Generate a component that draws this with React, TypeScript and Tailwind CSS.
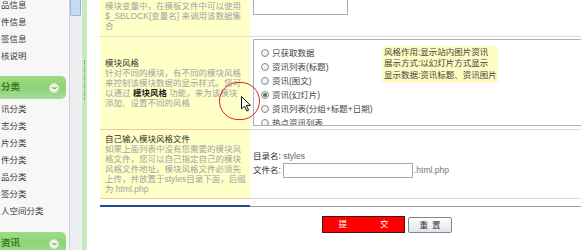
const topItems = ['品信息', '件信息', '签信息', '核说明'];
const midItems = ['讯分类', '志分类', '片分类', '件分类', '品分类', '签分类', '人空间分类'];

const radios = [
  '只获取数据',
  '资讯列表(标题)',
  '资讯(图文)',
  '资讯(幻灯片)',
  '资讯列表(分组+标题+日期)',
  '热点资讯列表',
];

const GroupHeader = ({ label }: { label: string }) => (
  <div className="w-[66px] h-[23px] rounded-r-[5px] bg-gradient-to-b from-[#9edb84] via-[#8fd476] to-[#a4dc9a] flex items-center justify-between">
    <span className="pl-[1px] text-[9.5px] font-bold text-[#3b7a1d]">{label}</span>
    <span className="mr-[7px] w-[10px] h-[10px] rounded-full bg-[#eef6e8] border border-[#cfe4c4] flex items-center justify-center">
      <svg width="5" height="4" viewBox="0 0 5 4">
        <path d="M0.5 1 L2.5 3 L4.5 1" fill="none" stroke="#5a6a50" strokeWidth="1" />
      </svg>
    </span>
  </div>
);

const Sidebar = () => (
  <div className="w-[69px] shrink-0 bg-[#f7f7f7] text-[#3a3a3a] text-[8.5px] overflow-hidden">
    <div className="-mt-[3.5px]">
      {topItems.map((t) => (
        <div key={t} className="h-[17px] leading-[17px] pl-[1px] whitespace-nowrap">
          {t}
        </div>
      ))}
    </div>
    <div className="mt-[11.5px]">
      <GroupHeader label="分类" />
    </div>
    <div className="mt-[2px]">
      {midItems.map((t) => (
        <div key={t} className="h-[17px] leading-[17px] pl-[1px] whitespace-nowrap">
          {t}
        </div>
      ))}
    </div>
    <div className="mt-[12px]">
      <GroupHeader label="资讯" />
    </div>
  </div>
);

const Radio = ({ label, checked }: { label: string; checked?: boolean }) => (
  <div className="h-[14px] flex items-center gap-[3px] whitespace-nowrap">
    <span className="w-[8px] h-[8px] rounded-full border border-[#7f8a96] bg-gradient-to-br from-white to-[#e4e4e4] flex items-center justify-center shrink-0">
      {checked && <span className="w-[4px] h-[4px] rounded-full bg-[#5d7a30]" />}
    </span>
    <span className="text-[#444]">{label}</span>
  </div>
);

const Line = ({ children }: { children: React.ReactNode }) => (
  <div className="h-[10px] leading-[10px] whitespace-nowrap">{children}</div>
);

export default function App() {
  return (
    <div className="relative flex w-[581px] h-[250px] overflow-hidden bg-white font-['Liberation_Sans','Noto_Sans_CJK_SC',sans-serif] text-[8.5px]">
      <Sidebar />

      {/* scrollbar */}
      <div className="w-[13px] shrink-0 bg-[#eceef1] border-l border-[#cfd3d8] border-r border-r-[#f4f4f4]">
        <div className="h-[16px] bg-[#c7d9f3] border border-[#9db4d8] border-t-0 rounded-b-[2px]" />
      </div>

      {/* splitter */}
      <div className="w-[5px] shrink-0 bg-[#c6eac2] flex justify-center">
        <div className="mt-[60px] w-0 h-[40px] border-l border-dotted border-[#6f9a6c]" />
      </div>

      {/* main */}
      <div className="flex-1 pl-[13px] bg-white">
        <div className="w-[490px]">
          {/* row 1 */}
          <div className="flex h-[37px]">
            <div className="w-[150px] shrink-0 bg-[#ffffc8] border-b border-[#e6e2bc] pl-[5px] pt-[1px] text-[#a3a3a3]">
              <Line>模块变量中，在模板文件中可以使用</Line>
              <Line>$_SBLOCK[变量名] 来调用该数据集</Line>
              <Line>合</Line>
            </div>
            <div className="flex-1 border-b border-[#dcdcdc] pl-[3px]">
              <div className="w-[95px] h-[15px] border border-t-0 border-[#a6adb6] bg-white" />
            </div>
          </div>

          {/* row 2 */}
          <div className="flex h-[93px]">
            <div className="w-[150px] shrink-0 bg-[#ffffc8] border-b border-[#efc99a] pl-[5px] flex flex-col justify-center text-[#a3a3a3]">
              <Line>
                <span className="text-[#333]">模块风格</span>
              </Line>
              <Line>针对不同的模块，有不同的模块风格</Line>
              <Line>来控制该模块数据的显示样式。您可</Line>
              <Line>
                以通过 <span className="text-[#222] font-bold">模块风格</span> 功能，来为该模块
              </Line>
              <Line>添加、设置不同的风格</Line>
            </div>
            <div className="flex-1 border-b border-[#dcdcdc] pl-[3px] pt-[2px]">
              <div className="relative h-[87px] border border-[#a9b4c2] bg-white overflow-hidden pl-[7px] pt-[6px]">
                {radios.map((r, i) => (
                  <Radio key={r} label={r} checked={i === 3} />
                ))}
                <div className="absolute left-[128px] top-[6px] w-[116px] h-[37px] bg-[#fffbc2] px-[2px] pt-[0.5px] text-[#444]">
                  <div className="h-[11.5px] leading-[11.5px] whitespace-nowrap">风格作用:显示站内图片资讯</div>
                  <div className="h-[11.5px] leading-[11.5px] whitespace-nowrap">展示方式:以幻灯片方式显示</div>
                  <div className="h-[11.5px] leading-[11.5px] whitespace-nowrap">显示数据:资讯标题、资讯图片</div>
                </div>
              </div>
            </div>
          </div>

          {/* row 3 */}
          <div className="flex h-[69px]">
            <div className="w-[150px] shrink-0 bg-[#ffffc8] border-b border-[#efc99a] pl-[5px] pb-[1px] flex flex-col justify-center text-[#a3a3a3]">
              <Line>
                <span className="text-[#333]">自己输入模块风格文件</span>
              </Line>
              <Line>如果上面列表中没有您需要的模块风</Line>
              <Line>格文件，您可以自己指定自己的模块</Line>
              <Line>风格文件地址。模块风格文件必须先</Line>
              <Line>上传，并放置于styles目录下面，后缀</Line>
              <Line>为 html.php</Line>
            </div>
            <div className="flex-1 border-b border-[#dcdcdc] pl-[3px] flex flex-col justify-center">
              <div className="h-[12px] leading-[12px] whitespace-nowrap">
                <span className="text-[#333]">目录名:</span> <span className="text-[#666]">styles</span>
              </div>
              <div className="h-[16px] flex items-center whitespace-nowrap">
                <span className="text-[#333] w-[30px]">文件名:</span>
                <div className="w-[130px] h-[15px] border border-[#9fa9b6] bg-white" />
                <span className="text-[#777] ml-[1px]">.html.php</span>
              </div>
            </div>
          </div>

          {/* table foot */}
          <div className="flex h-[8px]">
            <div className="w-[150px] shrink-0 border-b-2 border-[#1e4b8a]" />
            <div className="flex-1 border-b border-[#9c9c9c]" />
          </div>
        </div>

        {/* buttons */}
        <div className="mt-[9px] ml-[222px] flex items-start">
          <button className="w-[83px] h-[17px] bg-[#ff0000] border border-[#4a1414] text-white flex items-center justify-center gap-[33px] text-[8.5px]">
            <span>提</span>
            <span>交</span>
          </button>
          <button className="ml-[3px] mt-[1px] w-[44px] h-[16px] rounded-[2px] border border-[#7b8898] bg-gradient-to-b from-white to-[#dfe3e9] text-[#333] text-[8.5px] flex items-center justify-center gap-[4px]">
            <span>重</span>
            <span>置</span>
          </button>
        </div>
      </div>

      {/* highlight circle and cursor */}
      <div className="absolute left-[219px] top-[82px] w-[41px] h-[38px] rounded-full border-[1.5px] border-[#d82424]" />
      <svg className="absolute left-[241px] top-[96px]" width="11" height="16" viewBox="0 0 11 16">
        <path
          d="M0.5 0.5 L0.5 13 L3.5 10 L5.8 15 L7.6 14.2 L5.4 9.4 L9.5 9.4 Z"
          fill="white"
          stroke="#111"
          strokeWidth="1"
          strokeLinejoin="round"
        />
      </svg>
    </div>
  );
}
